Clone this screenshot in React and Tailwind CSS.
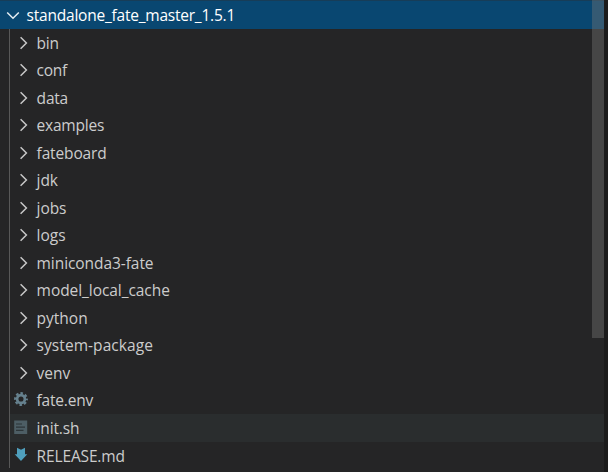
const folders = [
  ['bin', 'tracking-[-0.3px]'],
  ['conf', 'tracking-[-0.3px]'],
  ['data', 'tracking-[-0.2px]'],
  ['examples', 'tracking-[-0.22px]'],
  ['fateboard', 'tracking-[-0.15px]'],
  ['jdk', 'tracking-[-0.1px]'],
  ['jobs', 'tracking-[-0.1px]'],
  ['logs', 'tracking-[0px]'],
  ['miniconda3-fate', 'tracking-[-0.07px]'],
  ['model_local_cache', 'tracking-[-0.06px]'],
  ['python', 'tracking-[0px]'],
  ['system-package', 'tracking-[0.06px]'],
  ['venv', 'tracking-[0px]'],
];

function ChevronRight() {
  return (
    <svg className="ml-[9px] mr-[7px] h-4 w-4 shrink-0" viewBox="0 0 16 16" fill="none" stroke="#c8c8c8" strokeWidth="1.5">
      <path d="M4.6 2.2 10.4 8 4.6 13.8" />
    </svg>
  );
}

function Gear() {
  return (
    <svg className="h-4 w-4" viewBox="0 0 16 16" fill="none" stroke="#66818e">
      <circle cx="8" cy="7" r="3.9" strokeWidth="2.7" />
      <circle cx="8" cy="7" r="5.8" strokeWidth="2.2" strokeDasharray="2.55 2.005" strokeDashoffset="1.27" />
    </svg>
  );
}

function Script() {
  return (
    <svg className="h-4 w-4" viewBox="0 0 16 16">
      <path fill="#4d5e65" d="M1.2 0.5h13v13.5h-13z" />
      <path stroke="#2c3538" strokeWidth="1.2" d="M3 4h6M3 7.2h9M3 10.4h7.5" />
    </svg>
  );
}

function Markdown() {
  return (
    <svg className="h-4 w-4" viewBox="0 0 16 16">
      <path fill="#4f9fbd" d="M4 .8 8 2.7 12 .8v6.5h2.3L8 14 1.7 7.3H4z" />
    </svg>
  );
}

function FileRow({ name, icon, tracking, active }) {
  return (
    <div className={`flex h-[27.53px] items-center ${active ? 'bg-[#2a2d2e]' : ''}`}>
      <span className="ml-[3px] mr-[7.6px] flex w-4 shrink-0">{icon}</span>
      <span className={`pt-px ${tracking}`}>{name}</span>
    </div>
  );
}

export default function App() {
  return (
    <div className="flex h-[472px] w-[608px] overflow-hidden bg-[#1c1c1c] font-['Open_Sans','Noto_Sans',sans-serif] text-[15.5px] leading-[27px] text-[#cccccc]">
      <div className="relative w-[604px] bg-[#252526]">
        <div className="flex h-[29px] items-center border-t border-[#173d58] bg-[#094771] text-white">
          <svg className="ml-[5px] mr-[5.6px] h-4 w-4 shrink-0" viewBox="0 0 16 16" fill="none" stroke="#e5edf2" strokeWidth="1.5">
            <path d="M2.2 5.5 8 11.3 13.8 5.5" />
          </svg>
          <span className="tracking-[-0.22px]">standalone_fate_master_1.5.1</span>
        </div>
        <div className="flex">
          <div className="w-[9px] shrink-0" />
          <div className="h-[439px] w-px shrink-0 bg-[#585858]" />
          <div className="flex-1">
            {folders.map(([name, tracking]) => (
              <div key={name} className="flex h-[27.53px] items-center">
                <span className="-ml-[3px] flex w-[29.6px] shrink-0"><ChevronRight /></span>
                <span className={`pt-px ${tracking}`}>{name}</span>
              </div>
            ))}
            <FileRow name="fate.env" icon={<Gear />} tracking="tracking-[-0.2px]" />
            <FileRow name="init.sh" icon={<Script />} tracking="tracking-[-0.15px]" active />
            <FileRow name="RELEASE.md" icon={<Markdown />} tracking="tracking-[-0.15px]" />
          </div>
        </div>
        <div className="absolute right-0 top-0 h-[338px] w-3 bg-[#797979]/40" />
      </div>
    </div>
  );
}
